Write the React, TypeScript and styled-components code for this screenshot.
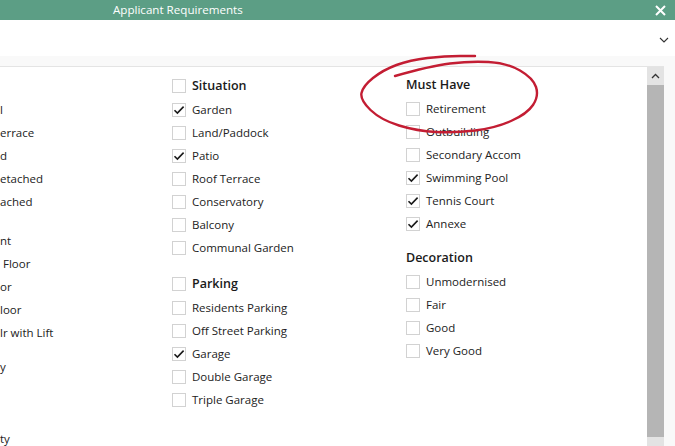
import React from "react";
import styled, { createGlobalStyle } from "styled-components";

const Global = createGlobalStyle`
  html, body { margin: 0; padding: 0; width: 675px; height: 446px; overflow: hidden; }
  body { font-family: "Open Sans", "Noto Sans", sans-serif; color: #1e1e1e; }
  * { box-sizing: border-box; }
`;

const Window = styled.div`
  position: relative;
  width: 675px;
  height: 446px;
  display: flex;
  flex-direction: column;
  background: #fff;
  overflow: hidden;
`;

const TitleBar = styled.div`
  height: 20px;
  flex: none;
  background: #5c9e85;
  display: flex;
  align-items: center;
  padding-left: 113px;
  padding-right: 9px;
`;

const Title = styled.div`
  color: #fff;
  font-size: 11.6px;
  line-height: 20px;
`;

const CloseButton = styled.div`
  margin-left: auto;
  width: 12px;
  height: 12px;
  display: flex;
  align-items: center;
  justify-content: center;
`;

const Toolbar = styled.div`
  height: 36px;
  flex: none;
  background: #fff;
  display: flex;
  align-items: center;
  justify-content: flex-end;
  padding-right: 6px;
  padding-top: 4px;
`;

const Body = styled.div`
  flex: 1;
  background: #f9f9f9;
  padding-top: 10px;
  padding-right: 11px;
  display: flex;
  min-height: 0;
`;

const Panel = styled.div`
  flex: 1;
  display: flex;
  border-top: 1px solid #e4e4e4;
  min-height: 0;
`;

const Content = styled.div`
  flex: 1;
  background: #fff;
  display: flex;
  padding-top: 6px;
  overflow: hidden;
`;

const Column = styled.div<{ $w?: number; $lift?: number }>`
  display: flex;
  flex-direction: column;
  margin-top: ${(p) => -(p.$lift ?? 0)}px;
  ${(p) => (p.$w ? `width: ${p.$w}px; flex: none;` : "flex: 1;")}
`;

const Group = styled.div<{ $gap?: number }>`
  display: flex;
  flex-direction: column;
  margin-top: ${(p) => p.$gap ?? 0}px;
`;

const Row = styled.div<{ $header?: boolean }>`
  height: ${(p) => (p.$header ? 25 : 23)}px;
  display: flex;
  align-items: center;
  gap: 6px;
  font-size: ${(p) => (p.$header ? 12.5 : 11.5)}px;
  font-weight: ${(p) => (p.$header ? 600 : 400)};
  color: ${(p) => (p.$header ? "#1a1a1a" : "#222")};
  white-space: nowrap;
`;

const Fragment = styled.span<{ $pad?: number }>`
  padding-left: ${(p) => p.$pad ?? 0}px;
`;

const Box = styled.span`
  width: 14px;
  height: 14px;
  flex: none;
  border: 1px solid #d2d2d2;
  background: #fff;
  display: flex;
  align-items: center;
  justify-content: center;
`;

const Scrollbar = styled.div`
  width: 17px;
  flex: none;
  display: flex;
  flex-direction: column;
  background: #e3e3e3;
`;

const ScrollButton = styled.div`
  height: 18px;
  flex: none;
  display: flex;
  align-items: center;
  justify-content: center;
`;

const Thumb = styled.div`
  flex: 1;
  background: #b5b5b5;
  margin-bottom: 9px;
`;

const Annotation = styled.svg`
  position: absolute;
  left: 355px;
  top: 50px;
  width: 190px;
  height: 90px;
  pointer-events: none;
  overflow: visible;
`;

const Check = () => (
  <svg width="12" height="12" viewBox="0 0 12 12">
    <path d="M1.5 6.2 L4.4 9.1 L10.6 2.6" fill="none" stroke="#1a1a1a" strokeWidth="1.6" />
  </svg>
);

const Checkbox: React.FC<{ label: string; checked?: boolean; header?: boolean }> = ({
  label,
  checked,
  header,
}) => (
  <Row $header={header}>
    <Box>{checked && <Check />}</Box>
    <span>{label}</span>
  </Row>
);

const points: [number, number][] = [
  [40, 26], [75, 16], [115, 11], [152, 13], [178, 28], [184, 46], [172, 64], [140, 78],
  [100, 83], [62, 81], [26, 70], [5, 50], [8, 36], [28, 20], [55, 10], [90, 6], [120, 6],
];

function smoothPath(pts: [number, number][]) {
  let d = `M${pts[0][0]} ${pts[0][1]}`;
  for (let i = 1; i < pts.length - 1; i++) {
    const mx = (pts[i][0] + pts[i + 1][0]) / 2;
    const my = (pts[i][1] + pts[i + 1][1]) / 2;
    d += ` Q${pts[i][0]} ${pts[i][1]} ${mx} ${my}`;
  }
  const last = pts[pts.length - 1];
  d += ` L${last[0]} ${last[1]}`;
  return d;
}

const col1: { text: string; pad?: number }[][] = [
  [{ text: "l" }, { text: "errace" }, { text: "d" }, { text: "etached" }, { text: "ached" }],
  [{ text: "nt" }, { text: "Floor", pad: 3 }, { text: "or" }, { text: "loor" }, { text: "lr with Lift" }],
  [{ text: "y" }],
  [{ text: "ty" }],
];
const col1Gaps = [25, 16, 11, 49];

export default function App() {
  const d = smoothPath(points);
  return (
    <Window>
      <Global />
      <TitleBar>
        <Title>Applicant Requirements</Title>
        <CloseButton>
          <svg width="11" height="11" viewBox="0 0 11 11">
            <path d="M1 1 L10 10 M10 1 L1 10" stroke="#fff" strokeWidth="2" />
          </svg>
        </CloseButton>
      </TitleBar>
      <Toolbar>
        <svg width="10" height="6" viewBox="0 0 10 6">
          <path d="M1 1 L5 5 L9 1" fill="none" stroke="#333" strokeWidth="1.1" />
        </svg>
      </Toolbar>
      <Body>
        <Panel>
          <Content>
            <Column $w={172}>
              {col1.map((g, gi) => (
                <Group key={gi} $gap={col1Gaps[gi]}>
                  {g.map((r, ri) => (
                    <Row key={ri}>
                      <Fragment $pad={r.pad}>{r.text}</Fragment>
                    </Row>
                  ))}
                </Group>
              ))}
            </Column>
            <Column $w={234}>
              <Group>
                <Checkbox header label="Situation" />
                <Checkbox checked label="Garden" />
                <Checkbox label="Land/Paddock" />
                <Checkbox checked label="Patio" />
                <Checkbox label="Roof Terrace" />
                <Checkbox label="Conservatory" />
                <Checkbox label="Balcony" />
                <Checkbox label="Communal Garden" />
              </Group>
              <Group $gap={12}>
                <Checkbox header label="Parking" />
                <Checkbox label="Residents Parking" />
                <Checkbox label="Off Street Parking" />
                <Checkbox checked label="Garage" />
                <Checkbox label="Double Garage" />
                <Checkbox label="Triple Garage" />
              </Group>
            </Column>
            <Column $lift={1}>
              <Group>
                <Row $header>Must Have</Row>
                <Checkbox label="Retirement" />
                <Checkbox label="Outbuilding" />
                <Checkbox label="Secondary Accom" />
                <Checkbox checked label="Swimming Pool" />
                <Checkbox checked label="Tennis Court" />
                <Checkbox checked label="Annexe" />
              </Group>
              <Group $gap={10}>
                <Row $header>Decoration</Row>
                <Checkbox label="Unmodernised" />
                <Checkbox label="Fair" />
                <Checkbox label="Good" />
                <Checkbox label="Very Good" />
              </Group>
            </Column>
          </Content>
          <Scrollbar>
            <ScrollButton>
              <svg width="9" height="6" viewBox="0 0 9 6">
                <path d="M1 5 L4.5 1.5 L8 5" fill="none" stroke="#333" strokeWidth="1.3" />
              </svg>
            </ScrollButton>
            <Thumb />
          </Scrollbar>
        </Panel>
      </Body>
      <Annotation viewBox="0 0 190 90">
        <path d={d} fill="none" stroke="#c31d33" strokeWidth="2.4" strokeLinecap="round" strokeLinejoin="round" />
      </Annotation>
    </Window>
  );
}
